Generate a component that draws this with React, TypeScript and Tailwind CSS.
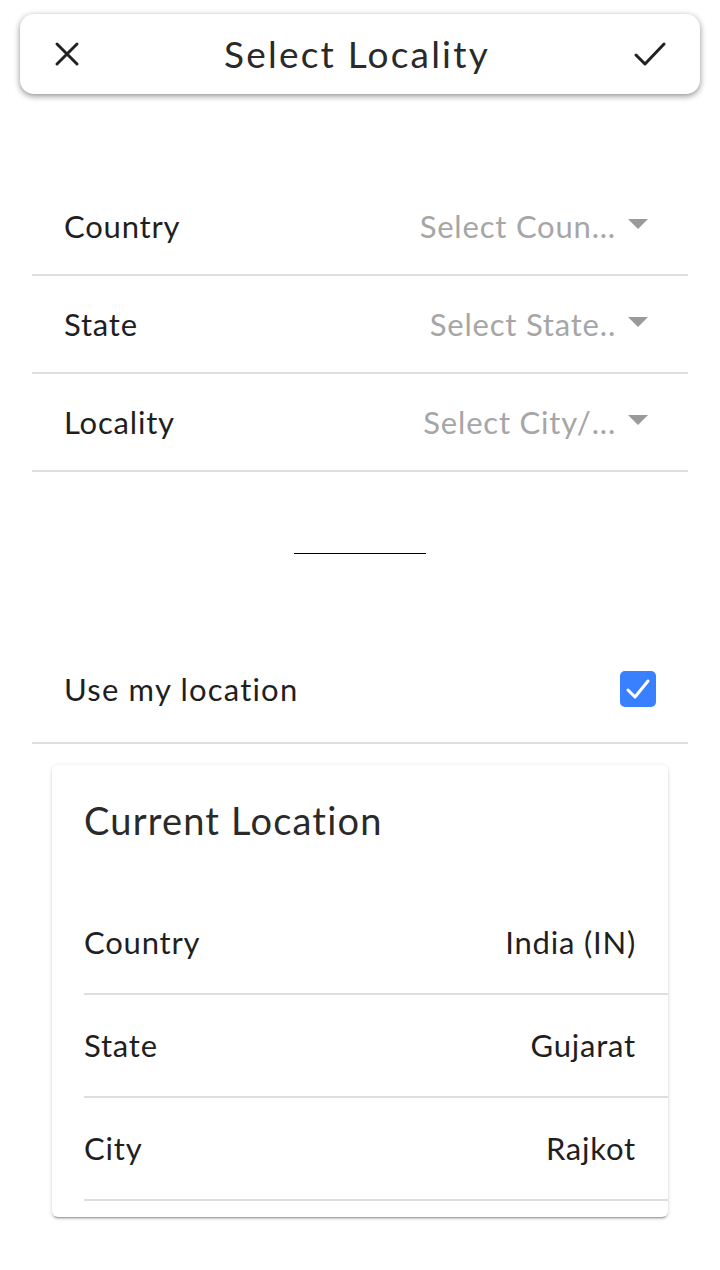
import type { ReactNode } from "react";

const FONT = { fontFamily: "Lato, 'Liberation Sans', sans-serif" };

function SelectRow({ label, placeholder }: { label: string; placeholder: string }) {
  return (
    <div className="flex h-[98px] items-center border-b-2 border-[#dedede] pl-[32px] pr-[40px]">
      <span className="text-[31px] tracking-[0.8px] text-[#1f1f1f]">{label}</span>
      <div className="ml-auto flex items-center">
        <span className="whitespace-nowrap text-[31px] tracking-[0.8px] text-[#a6a6a6]">{placeholder}</span>
        <svg width="20" height="10" viewBox="0 0 20 10" className="-mt-[4px] ml-[12px]">
          <path d="M0 0 L20 0 L10 10 Z" fill="#9a9a9a" />
        </svg>
      </div>
    </div>
  );
}

function InfoRow({ label, value }: { label: string; value: ReactNode }) {
  return (
    <div className="flex h-[103px] items-center border-b-2 border-[#dedede] pr-[32px]">
      <span className="text-[31px] tracking-[0.8px] text-[#1f1f1f]">{label}</span>
      <span className="ml-auto text-[31px] tracking-[0.8px] text-[#1f1f1f]">{value}</span>
    </div>
  );
}

export default function App() {
  return (
    <div className="min-h-[1270px] w-[720px] bg-white" style={FONT}>
      {/* toolbar card */}
      <div className="mx-[20px] mt-[14px] flex h-[80px] items-center rounded-[14px] bg-white px-[34px] shadow-[0_2px_6px_rgba(0,0,0,0.45)]">
        <svg width="26" height="26" viewBox="0 0 26 26">
          <path d="M3 3 L23 23 M23 3 L3 23" stroke="#222" strokeWidth="3" strokeLinecap="round" />
        </svg>
        <div className="flex-1 text-center text-[37px] tracking-[2.2px] text-[#2a2a2a]">Select Locality</div>
        <svg width="32" height="26" viewBox="0 0 32 26">
          <path d="M2 14 L11 23 L30 3" stroke="#222" strokeWidth="3" fill="none" strokeLinecap="round" strokeLinejoin="round" />
        </svg>
      </div>

      <div className="mx-[32px] mt-[84px]">
        <SelectRow label="Country" placeholder="Select Coun..." />
        <SelectRow label="State" placeholder="Select State.." />
        <SelectRow label="Locality" placeholder="Select City/..." />
      </div>

      <div className="mx-auto mt-[81px] h-px w-[132px] bg-black" />

      <div className="mx-[32px] mt-[82px] flex h-[108px] items-center border-b-2 border-[#dedede] pl-[32px] pr-[32px]">
        <span className="text-[31px] tracking-[1.2px] text-[#1f1f1f]">Use my location</span>
        <div className="ml-auto flex h-[36px] w-[36px] items-center justify-center rounded-[5px] bg-[#3880ff]">
          <svg width="26" height="22" viewBox="0 0 26 22">
            <path d="M3 12 L10 19 L23 3" stroke="#fff" strokeWidth="3" fill="none" strokeLinecap="round" strokeLinejoin="round" />
          </svg>
        </div>
      </div>

      <div className="mx-[52px] mt-[21px] rounded-[6px] bg-white pb-[16px] pl-[32px] shadow-[0_3px_1px_-2px_rgba(0,0,0,0.2),0_2px_2px_0_rgba(0,0,0,0.14),0_1px_5px_0_rgba(0,0,0,0.12)]">
        <div className="pb-[50px] pt-[33px] text-[38px] leading-[44px] tracking-[1.2px] text-[#2a2a2a]">Current Location</div>
        <InfoRow label="Country" value="India (IN)" />
        <InfoRow label="State" value="Gujarat" />
        <InfoRow label="City" value="Rajkot" />
      </div>
    </div>
  );
}
